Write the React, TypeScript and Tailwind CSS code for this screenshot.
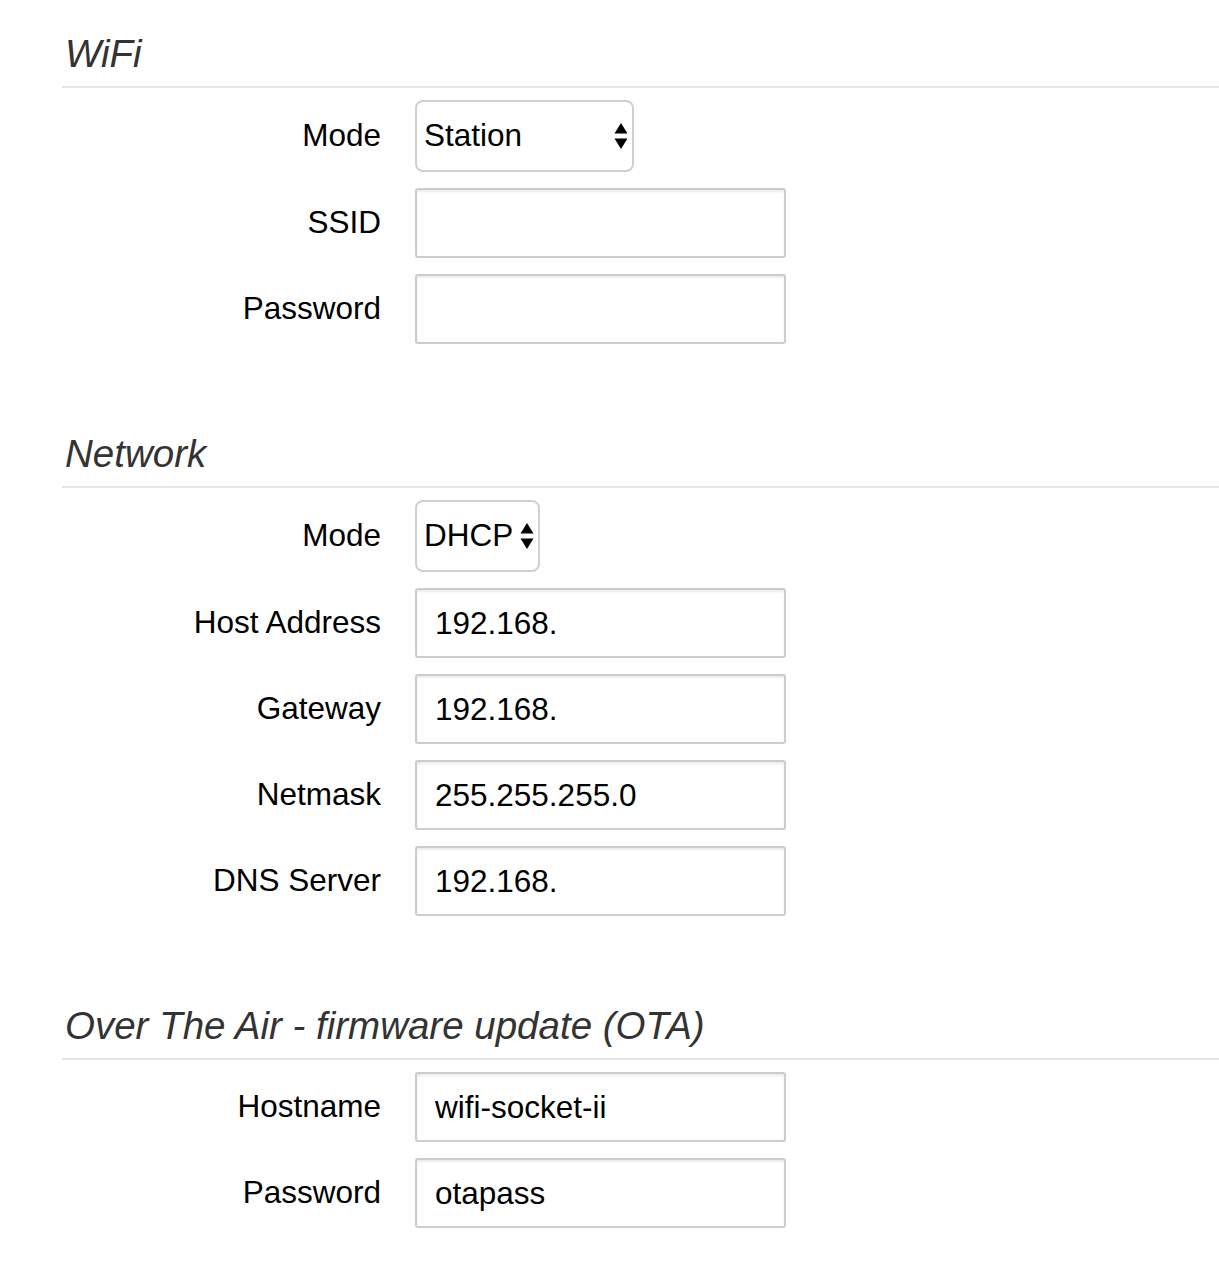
import { useState } from "react";

const font = { fontFamily: '"Liberation Sans", Arial, Helvetica, sans-serif' };

function Legend({ title }: { title: string }) {
  return (
    <h2 className="pl-[3px] pt-[2px] pb-[9px] border-b-2 border-[#e5e5e5] text-[38.5px] leading-[46px] italic text-[#333]">
      {title}
    </h2>
  );
}

function Row({ label, children }: { label: string; children: React.ReactNode }) {
  return (
    <div className="flex items-center gap-[34px]">
      <label className="w-[319px] shrink-0 text-right text-[31.5px] text-black">{label}</label>
      {children}
    </div>
  );
}

function TextInput({ value }: { value?: string }) {
  const [v, setV] = useState(value ?? "");
  return (
    <input
      type="text"
      value={v}
      onChange={(e) => setV(e.target.value)}
      className="h-[70px] w-[371px] rounded-[3px] border-2 border-[#cccccc] bg-white pl-[18px] text-[31.5px] text-black shadow-[inset_0_2px_2px_rgba(0,0,0,0.075)] outline-none"
      style={font}
    />
  );
}

function Arrows() {
  return (
    <svg width="14" height="26" viewBox="0 0 14 26" className="shrink-0">
      <path d="M7 0 L13.5 10.5 L0.5 10.5 Z" fill="#000" />
      <path d="M7 26 L13.5 15.5 L0.5 15.5 Z" fill="#000" />
    </svg>
  );
}

function Select({ options, width }: { options: string[]; width: string }) {
  const [v, setV] = useState(options[0]);
  return (
    <div
      className={`flex h-[72px] items-center rounded-[8px] border-2 border-[#d0d0d0] bg-white pl-[7px] pr-[4px] ${width}`}
    >
      <select
        value={v}
        onChange={(e) => setV(e.target.value)}
        className="min-w-0 flex-1 appearance-none bg-transparent text-[31.5px] text-black outline-none"
        style={font}
      >
        {options.map((o) => (
          <option key={o}>{o}</option>
        ))}
      </select>
      <Arrows />
    </div>
  );
}

export default function App() {
  return (
    <div className="min-h-[1286px] bg-white pl-[62px] pt-[29px]" style={font}>
      <section className="mb-[85px]">
        <Legend title="WiFi" />
        <div className="mt-[12px] flex flex-col gap-[16px]">
          <Row label="Mode">
            <Select options={["Station", "Access Point"]} width="w-[219px]" />
          </Row>
          <Row label="SSID">
            <TextInput />
          </Row>
          <Row label="Password">
            <TextInput />
          </Row>
        </div>
      </section>

      <section className="mb-[85px]">
        <Legend title="Network" />
        <div className="mt-[12px] flex flex-col gap-[16px]">
          <Row label="Mode">
            <Select options={["DHCP", "Static"]} width="w-[125px]" />
          </Row>
          <Row label="Host Address">
            <TextInput value="192.168." />
          </Row>
          <Row label="Gateway">
            <TextInput value="192.168." />
          </Row>
          <Row label="Netmask">
            <TextInput value="255.255.255.0" />
          </Row>
          <Row label="DNS Server">
            <TextInput value="192.168." />
          </Row>
        </div>
      </section>

      <section>
        <Legend title="Over The Air - firmware update (OTA)" />
        <div className="mt-[12px] flex flex-col gap-[16px]">
          <Row label="Hostname">
            <TextInput value="wifi-socket-ii" />
          </Row>
          <Row label="Password">
            <TextInput value="otapass" />
          </Row>
        </div>
      </section>
    </div>
  );
}
